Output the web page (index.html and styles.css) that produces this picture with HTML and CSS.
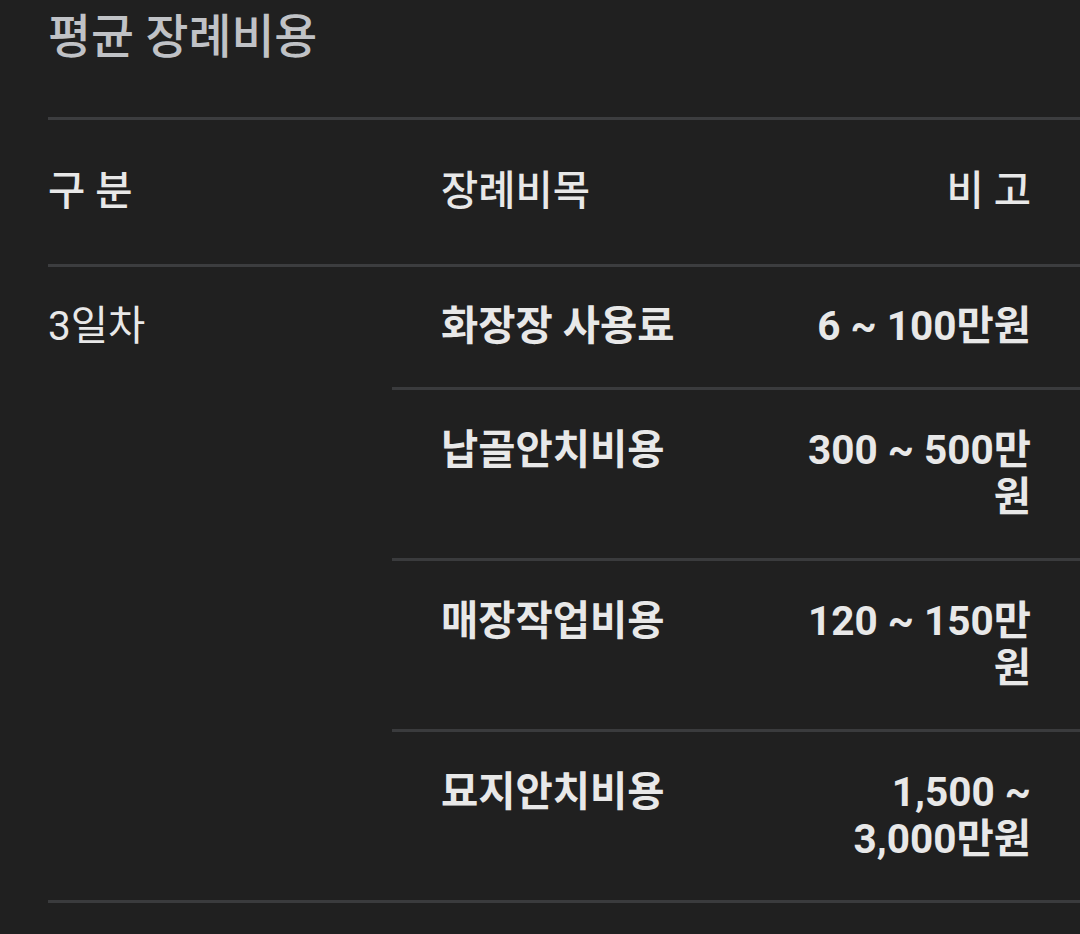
FILE: index.html
```html
<!DOCTYPE html>
<html lang="ko">
<head>
<meta charset="utf-8">
<link rel="stylesheet" href="styles.css">
</head>
<body>
<div class="page">
  <h2 class="title">평균 장례비용</h2>
  <table class="cost">
    <colgroup>
      <col class="c1">
      <col class="c2">
      <col class="c3">
    </colgroup>
    <thead>
      <tr>
        <th class="h1">구 분</th>
        <th class="h2">장례비목</th>
        <th class="h3">비 고</th>
      </tr>
    </thead>
    <tbody>
      <tr>
        <td class="cat" rowspan="4">3일차</td>
        <td class="item">화장장 사용료</td>
        <td class="price">6 ~ 100만원</td>
      </tr>
      <tr>
        <td class="item">납골안치비용</td>
        <td class="price">300 ~ 500만원</td>
      </tr>
      <tr>
        <td class="item">매장작업비용</td>
        <td class="price">120 ~ 150만원</td>
      </tr>
      <tr>
        <td class="item">묘지안치비용</td>
        <td class="price">1,500 ~ 3,000만원</td>
      </tr>
    </tbody>
  </table>
</div>
</body>
</html>
```

FILE: styles.css
```css
html, body {
  margin: 0;
  padding: 0;
  background: #202020;
}

body {
  font-family: Roboto, "Noto Sans CJK KR", sans-serif;
  color: #e8e8e8;
}

.page {
  padding-left: 48px;
  width: 1032px;
}

.title {
  margin: 0;
  padding: 7px 0 0 0;
  height: 117px;
  box-sizing: border-box;
  font-size: 46.7px;
  line-height: 60px;
  font-weight: 500;
  color: #c0c2c6;
}

.cost {
  width: 1032px;
  border-collapse: collapse;
  table-layout: fixed;
  font-size: 40.5px;
  line-height: 47.5px;
}

.c1 { width: 344px; }
.c2 { width: 388px; }
.c3 { width: 300px; }

thead tr {
  border-top: 3px solid #3c3d3f;
  border-bottom: 3px solid #3c3d3f;
}

th {
  padding: 48.2px 0;
  font-weight: 500;
  text-align: left;
  vertical-align: top;
}

th.h2 { padding-left: 49px; }
th.h3 { text-align: right; padding-right: 49px; }

td {
  padding: 36.5px 0;
  vertical-align: top;
  border-bottom: 3px solid #3a3b3d;
}

td.cat {
  font-weight: 400;
}

td.item {
  padding-left: 49px;
  font-weight: 700;
}

td.price {
  padding-left: 12px;
  padding-right: 49px;
  text-align: right;
  font-weight: 700;
}
```
